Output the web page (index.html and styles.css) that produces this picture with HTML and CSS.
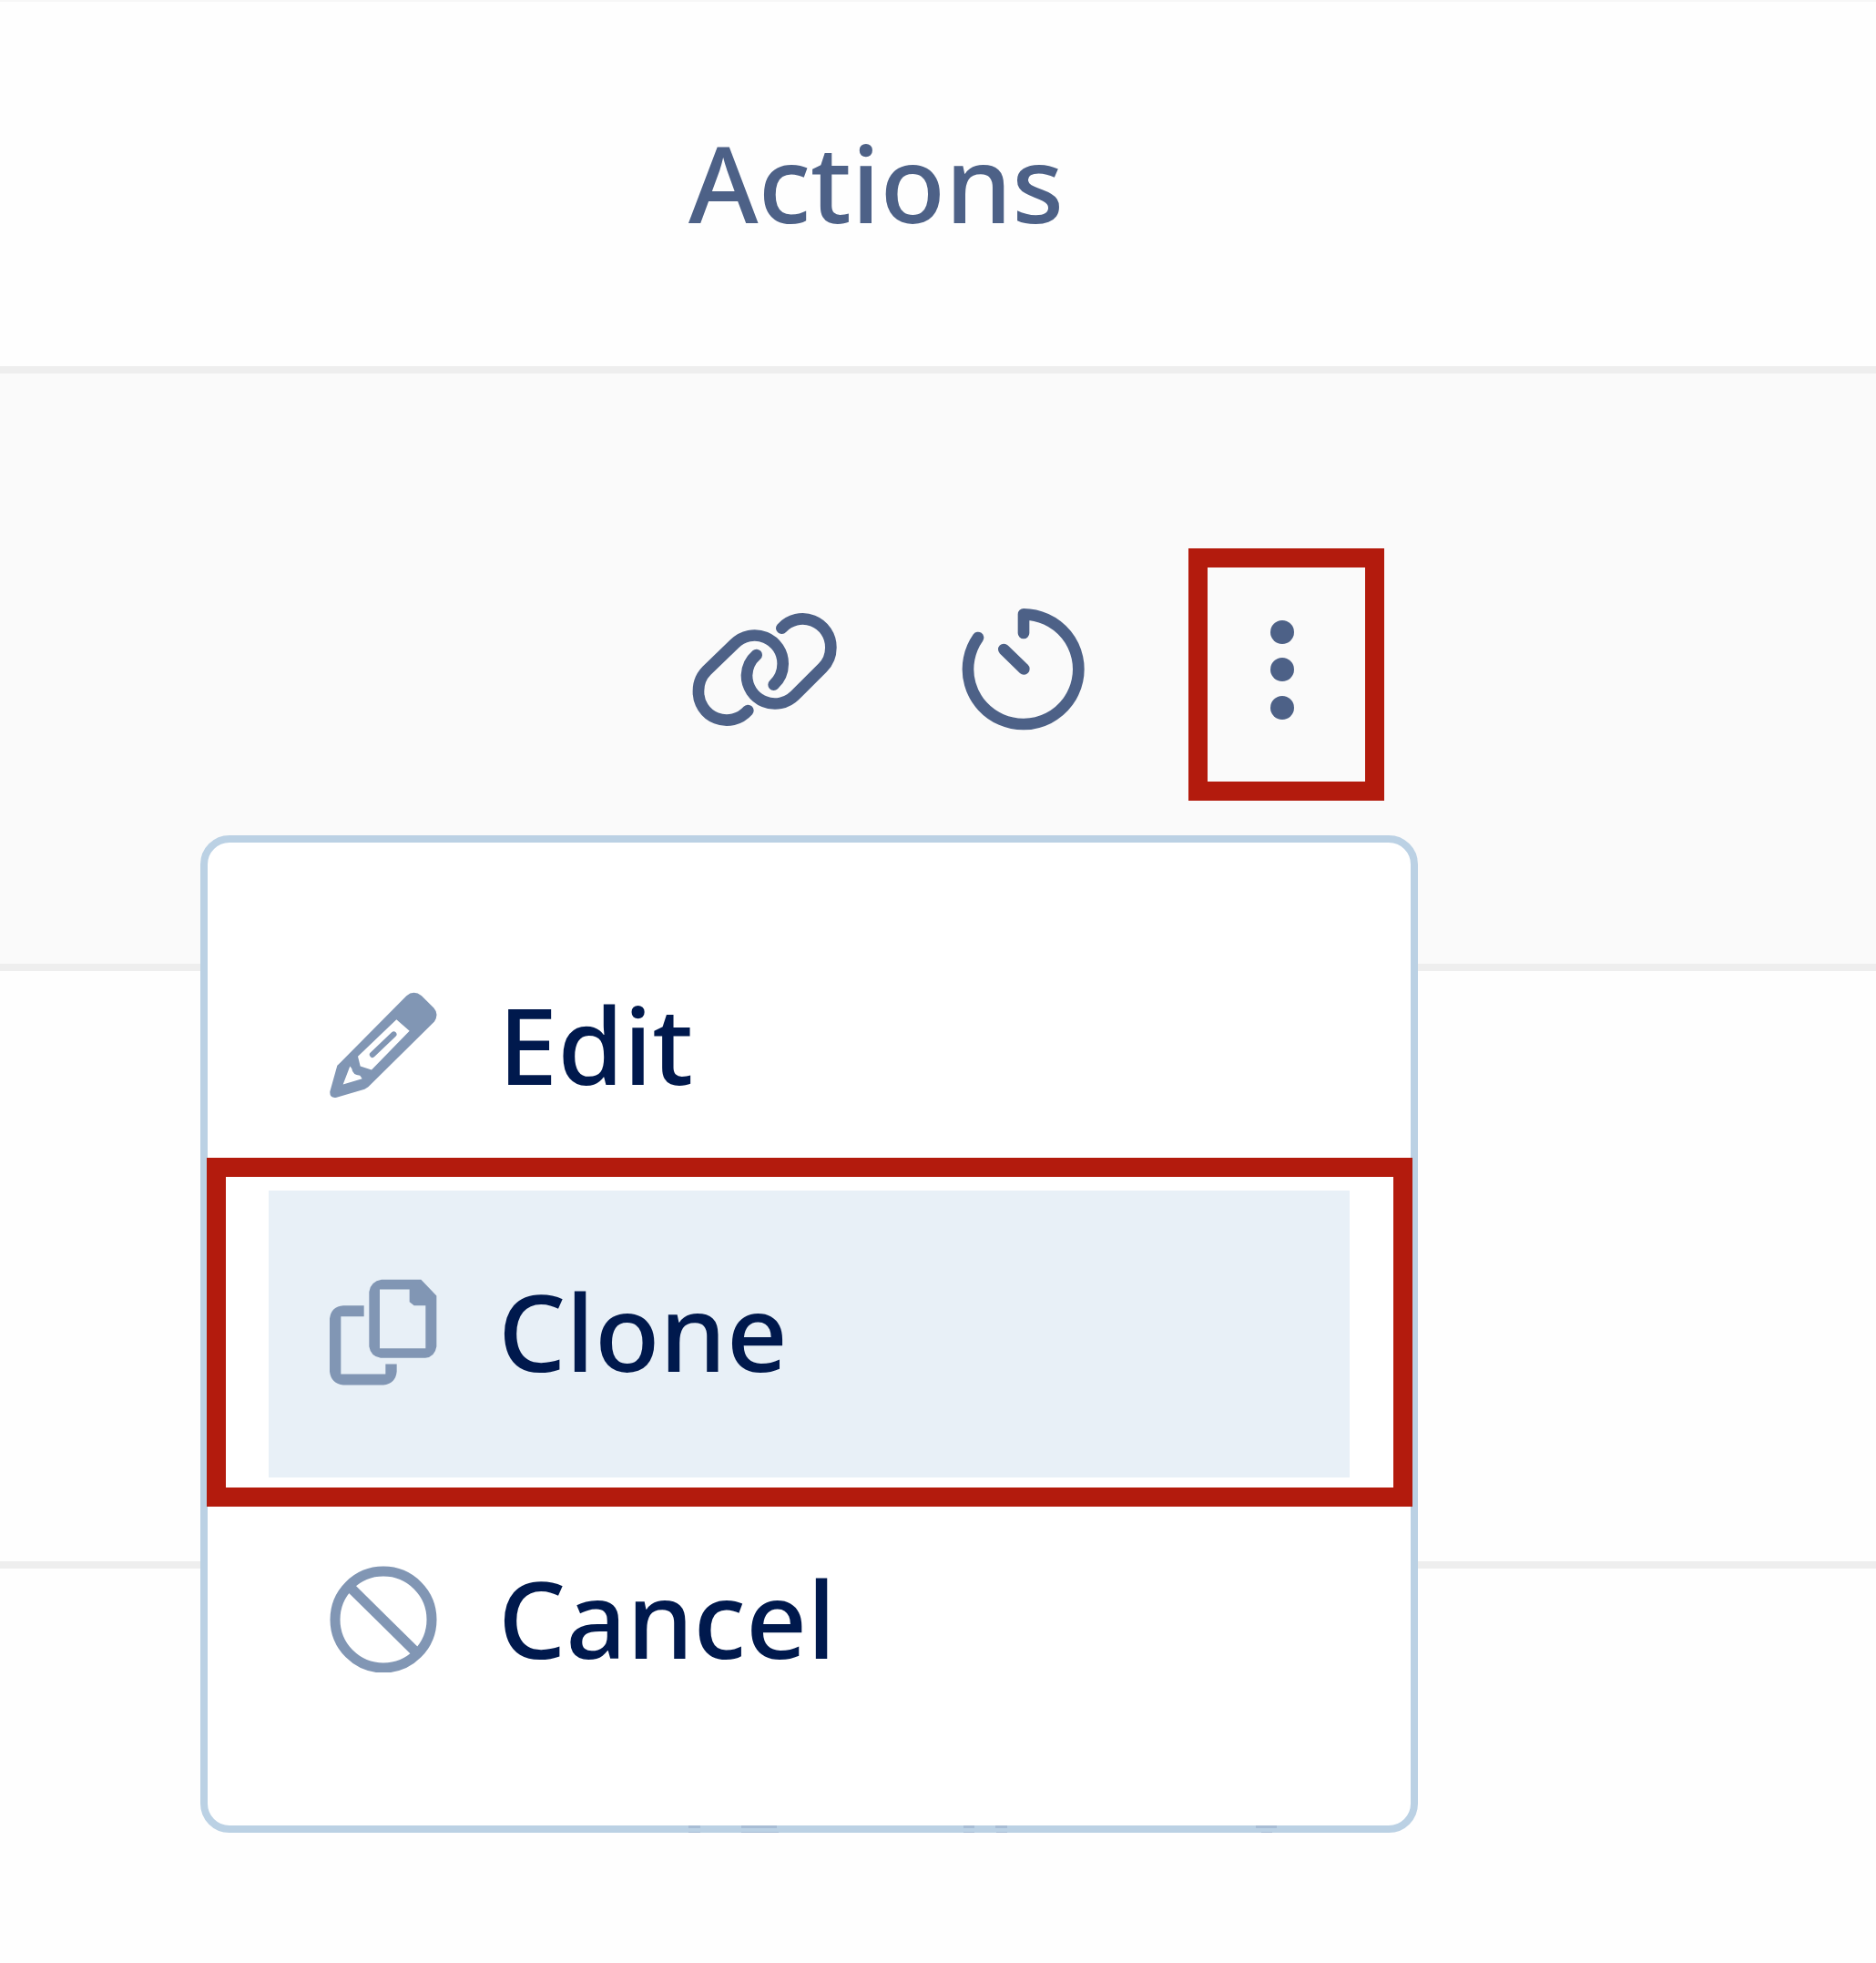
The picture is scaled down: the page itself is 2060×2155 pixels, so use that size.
FILE: index.html
```html
<!DOCTYPE html>
<html lang="en">
<head>
  <meta charset="utf-8"/>
  <meta name="viewport" content="width=device-width, initial-scale=1.0"/>
  <title>Actions</title>
  <link rel="stylesheet" href="styles.css">
</head>
<body>
  <table class="list">
    <thead>
      <tr><th scope="col">Actions</th></tr>
    </thead>
    <tbody>
      <tr class="active">
        <td>
          <div class="actions">
            <button class="action" type="button" aria-label="Copy link">
              <svg width="160" height="124" viewBox="58 100 480 372" fill="none" stroke="currentColor" stroke-width="38" stroke-linecap="round">
                <path d="M242 421A93 93 0 0 1 79 356A93 93 0 0 1 106 290L198 201A93 93 0 0 1 357 267A93 93 0 0 1 327 336"/>
                <path d="M353 150A93 93 0 0 1 515 214A93 93 0 0 1 488 280L397 371A93 93 0 0 1 238 305A93 93 0 0 1 270 238"/>
              </svg>
            </button>
            <button class="action" type="button" aria-label="History">
              <svg width="136" height="136" viewBox="77 84 408 408" fill="none" stroke="currentColor" stroke-width="38" stroke-linecap="round" stroke-linejoin="round">
                <path d="M131 183A182 181 0 1 0 281 106V168"/>
                <path d="M216 222L282 286"/>
              </svg>
            </button>
            <button class="action marked" type="button" aria-label="More" aria-expanded="true">
              <svg width="26" height="110" viewBox="0 0 26 110" fill="currentColor">
                <circle cx="13" cy="14" r="13"/>
                <circle cx="13" cy="55" r="13"/>
                <circle cx="13" cy="97" r="13"/>
              </svg>
            </button>

            <div class="menu">
              <button class="item" type="button">
                <svg width="118" height="117" viewBox="65 58 354 350">
                  <path fill="currentColor" fill-rule="evenodd" d="M98 292L318 70Q342 50 368 70L408 110Q426 130 410 155L192 370L180 378L88 405Q64 409 66 385L90 300ZM285 148L158 270L166 302L203 314L328 186ZM132 302L109 362L172 343L165 333Q140 330 138 310Z"/>
                  <path fill="none" stroke="currentColor" stroke-width="19" stroke-linecap="round" d="M276 197L206 264"/>
                </svg>
                <span>Edit</span>
              </button>
              <button class="item current" type="button">
                <svg width="118" height="117" viewBox="65 40 354 350">
                  <path fill="currentColor" fill-rule="evenodd" d="M236 42H366L417 95V262Q412 295 380 300H233Q200 294 195 262V82Q200 48 236 42ZM230 74V268H381V127H343L328 115V74Z"/>
                  <path fill="currentColor" d="M178 127H110Q70 130 65 170V345Q70 385 110 389H242Q282 385 286 345V320H249V353H102V163H178Z"/>
                </svg>
                <span>Clone</span>
              </button>
              <button class="item" type="button">
                <svg width="118" height="117" viewBox="0 0 118 117" fill="none" stroke="currentColor" stroke-width="11">
                  <circle cx="59" cy="59" r="53"/>
                  <path d="M21 22L96 96"/>
                </svg>
                <span>Cancel</span>
              </button>
              <!-- faint marks along the bottom edge -->
              <svg class="edge" width="650" height="9" viewBox="0 0 650 9" fill="#a8bdd5" aria-hidden="true">
                <path d="M1 1H14V4H1ZM1 8H14V9H1ZM59 1H98V4H59ZM59 8H100V9H59ZM303 1H315V4H303ZM303 8H315V9H303ZM338 1H351V4H338ZM339 8H351V9H339ZM624 1H647V4H624ZM630 8H642V9H630Z"/>
              </svg>
            </div>
          </div>
        </td>
      </tr>
      <tr><td></td></tr>
      <tr><td></td></tr>
    </tbody>
  </table>
</body>
</html>
```
FILE: styles.css
```css
body {
  margin: 0;
  background: #fefefe;
  color: #4d6187;
  font-family: "Noto Sans", "Open Sans", sans-serif;
  font-size: 117px;
  line-height: 160px;
  overflow: hidden;
}
button {
  margin: 0;
  padding: 0;
  border: 0;
  background: none;
  color: inherit;
  font: inherit;
  cursor: pointer;
}
svg {
  display: block;
  flex: none;
}

.list {
  width: 100%;
  border-collapse: separate;
  border-spacing: 0;
  border-top: 2px solid #f7f7f7;
}
.list th {
  padding: 118px 0 122px 756px;
  border-bottom: 8px solid #eee;
  text-align: left;
  font-weight: 500;
}
.list td {
  height: 648px;
  padding: 0;
  border-bottom: 8px solid #eee;
}
.list tr:last-child td {
  height: 432px;
  border-bottom: 0;
}
.active td {
  background: #fafafa;
}

.actions {
  position: relative;
  display: flex;
  padding: 2px 0 0 698px;
}
.action {
  position: relative;
  display: flex;
  align-items: center;
  justify-content: center;
  width: 284px;
  height: 284px;
}

/* red callouts */
.marked::after,
.current::after {
  content: "";
  position: absolute;
  border: 21px solid #b31b0d;
}
.marked::after {
  inset: 9px 30px -2px 39px;
}
.current::after {
  inset: -36px -69px -32px -68px;
}

.menu {
  position: absolute;
  top: 326px;
  left: 220px;
  width: 1187px;
  padding: 67px;
  border: 8px solid #bbd1e4;
  border-radius: 32px;
  background: #fff;
}
.item {
  position: relative;
  display: flex;
  align-items: center;
  gap: 67px;
  width: 100%;
  height: 315px;
  padding: 0 67px 4px;
  color: #8196b4;
  font-weight: 500;
}
.item span {
  padding-bottom: 4px;
  color: #00194d;
}
.current {
  background: #e8f0f7;
}
.edge {
  position: absolute;
  left: 527px;
  bottom: -8px;
}
```
